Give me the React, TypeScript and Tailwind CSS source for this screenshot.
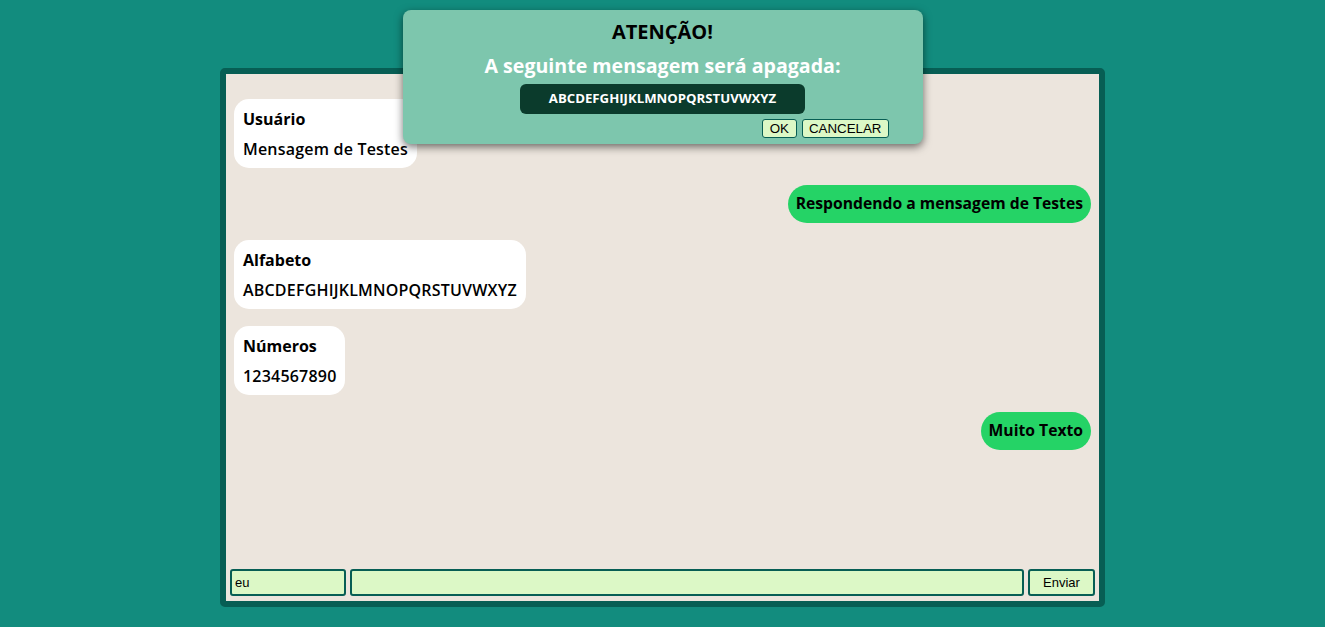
import React from "react";

interface Message {
  user?: string;
  text: string;
  mine?: boolean;
}

const messages: Message[] = [
  { user: "Usuário", text: "Mensagem de Testes" },
  { text: "Respondendo a mensagem de Testes", mine: true },
  { user: "Alfabeto", text: "ABCDEFGHIJKLMNOPQRSTUVWXYZ" },
  { user: "Números", text: "1234567890" },
  { text: "Muito Texto", mine: true },
];

const Bubble = ({ user, text, mine }: Message) => {
  if (mine) {
    return (
      <div className="self-end bg-[#25D366] rounded-full px-2 h-[38px] flex items-center font-bold text-[15.7px] text-black">
        {text}
      </div>
    );
  }
  return (
    <div className="self-start bg-white rounded-[15px] px-[9px] pt-[5px] pb-[4px] text-[16px] text-black">
      <p className="leading-[30px] font-bold">{user}</p>
      <p className="leading-[30px] font-semibold tracking-[0.2px]">{text}</p>
    </div>
  );
};

const App = () => {
  return (
    <div
      className="relative min-h-screen h-[627px] bg-[#128C7E] flex justify-center pt-[68px]"
      style={{ fontFamily: '"Open Sans", "Noto Sans", sans-serif' }}
    >
      <div className="w-[885px] h-[539px] border-[6px] border-[#075E54] rounded-[5px] bg-[#ECE5DD] flex flex-col">
        <div className="flex-1 flex flex-col gap-[17px] px-2 pt-[25px]">
          {messages.map((m, i) => (
            <Bubble key={i} {...m} />
          ))}
        </div>
        <div
          className="flex gap-1 px-1 pb-[5px] h-[32px]"
          style={{ fontFamily: '"Liberation Sans", Arial, sans-serif' }}
        >
          <input
            defaultValue="eu"
            className="w-[116px] h-[27px] bg-[#DCF8C6] border-2 border-[#075E54] rounded-[3px] px-[3px] text-[13px] text-black outline-none"
          />
          <input className="flex-1 h-[27px] bg-[#DCF8C6] border-2 border-[#075E54] rounded-[3px] outline-none" />
          <button className="w-[67px] h-[27px] bg-[#DCF8C6] border-2 border-[#075E54] rounded-[3px] text-[13px] text-black">
            Enviar
          </button>
        </div>
      </div>

      <div className="absolute top-[10px] left-1/2 -translate-x-1/2 w-[520px] h-[134px] bg-[#7DC6AD] rounded-[8px] shadow-[0_3px_8px_rgba(0,0,0,0.55)] flex flex-col items-center">
        <h1 className="mt-[8px] leading-[28px] text-[20px] font-bold text-black">ATENÇÃO!</h1>
        <h2 className="mt-[6px] leading-[28px] text-[19.6px] font-bold text-white">
          A seguinte mensagem será apagada:
        </h2>
        <div className="mt-[4px] h-[30px] px-[29px] bg-[#0B3B2C] rounded-[6px] flex items-center text-[13.2px] font-bold text-white">
          ABCDEFGHIJKLMNOPQRSTUVWXYZ
        </div>
        <div
          className="self-end mr-[34px] mt-[5px] flex gap-[5px]"
          style={{ fontFamily: '"Liberation Sans", Arial, sans-serif' }}
        >
          <button className="h-[19px] px-[7px] bg-[#DCF8C6] border border-[#075E54] rounded-[3px] text-[13.33px] leading-none text-black">
            OK
          </button>
          <button className="h-[19px] px-[6px] bg-[#DCF8C6] border border-[#075E54] rounded-[3px] text-[13.33px] leading-none text-black">
            CANCELAR
          </button>
        </div>
      </div>
    </div>
  );
};

export default App;
